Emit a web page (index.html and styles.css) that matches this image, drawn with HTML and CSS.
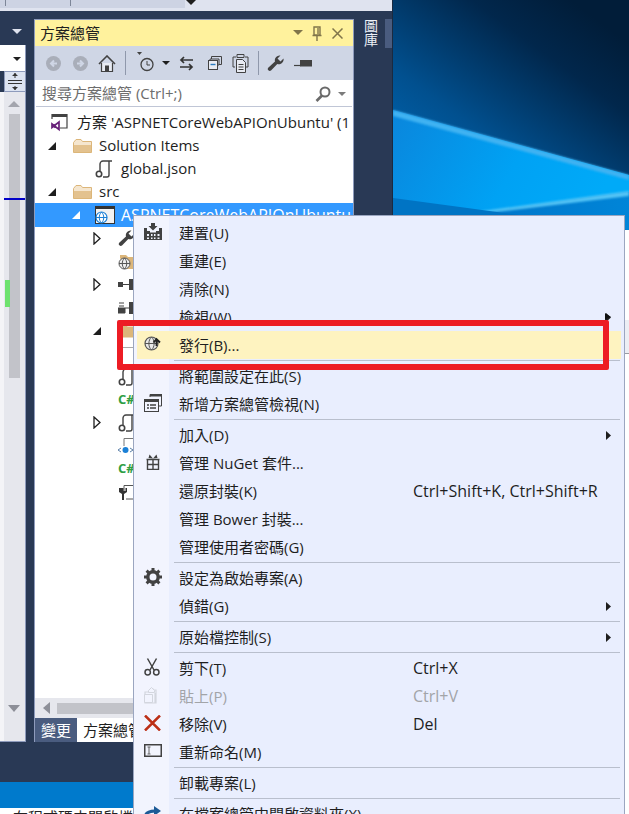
FILE: index.html
```html
<!DOCTYPE html>
<html lang="zh-Hant">
<head>
<meta charset="utf-8">
<title>方案總管</title>
<link rel="stylesheet" href="styles.css">
</head>
<body>
<div class="desktop">
  <svg class="wallpaper" viewBox="0 0 236 230" preserveAspectRatio="none">
    <defs>
      <linearGradient id="sky" x1="0" y1="1" x2="0.75" y2="0">
        <stop offset="0" stop-color="#0074c8"/><stop offset="0.45" stop-color="#01508f"/><stop offset="0.8" stop-color="#01274c"/><stop offset="1" stop-color="#011d39"/>
      </linearGradient>
      <linearGradient id="low" x1="0" y1="0" x2="1" y2="0.3">
        <stop offset="0" stop-color="#0a86dc"/><stop offset="0.6" stop-color="#00a2f4"/><stop offset="1" stop-color="#00aaf8"/>
      </linearGradient>
      <linearGradient id="sea" x1="0" y1="0" x2="1" y2="0">
        <stop offset="0" stop-color="#0070c4"/><stop offset="1" stop-color="#0085d8"/>
      </linearGradient>
      <filter id="soft"><feGaussianBlur stdDeviation="1"/></filter>
    </defs>
    <rect width="236" height="230" fill="url(#sky)"/>
    <polygon points="0,110 236,175 236,230 0,230" fill="url(#low)"/>
    <polygon points="0,110 236,175 236,180 0,116" fill="#3fb2f2" filter="url(#soft)"/>
    <polygon points="55,217 236,192 236,230 40,230" fill="url(#sea)"/>
    <polygon points="60,215 236,191 236,196 70,216" fill="#52c4f6" filter="url(#soft)"/>
    <polygon points="0,198 236,230 0,230" fill="#0074c4"/>
  </svg>
  <div class="right-strip"><div class="right-bar"></div></div>

  <div class="ide">
    <div class="topbar">
      <div class="topbar-tools"><i class="tsep"></i><i class="tsep second"></i></div>
      <svg class="topbar-caret" width="10" height="6"><polygon points="0,0 10,0 5,5" fill="#1e1e1e"/></svg>
    </div>
    <div class="workspace">
      <div class="editor-side">
        <div class="editor-head"><svg width="10" height="6"><polygon points="0,0 10,0 5,5" fill="#dfe3ef"/></svg></div>
        <div class="editor-combo"><svg width="8" height="5"><polygon points="0,0 8,0 4,4" fill="#1e1e1e"/></svg></div>
        <div class="editor-split">
          <svg width="14" height="17" viewBox="0 0 14 17"><path d="M0 7.5h14M0 10.5h14" stroke="#333" fill="none"/><path d="M7 0v5M7 13v4" stroke="#333"/><path d="M4 3l3-3 3 3zM4 14l3 3 3-3z" fill="#333"/></svg>
        </div>
        <div class="editor-gutter">
          <div class="vscroll">
            <svg class="sc-up" width="12" height="6"><polygon points="0,6 12,6 6,0" fill="#a3a5ad"/></svg>
            <div class="sc-thumb"><b class="sc-blue"></b><b class="sc-green"></b></div>
            <svg class="sc-down" width="12" height="7"><polygon points="0,0 12,0 6,7" fill="#8d8f98"/></svg>
          </div>
        </div>
      </div>

      <div class="explorer">
        <div class="ex-title">
          <span class="ex-name">方案總管</span>
          <svg width="10" height="6"><polygon points="0,0 10,0 5,5" fill="#80754a"/></svg>
          <svg class="pin" width="10" height="15" viewBox="0 0 10 15"><path d="M2 1h6v8H2zM0.5 9.5h9M5 10v5M6 2v6" stroke="#80754a" stroke-width="1.4" fill="none"/></svg>
          <svg class="closex" width="11" height="11" viewBox="0 0 11 11"><path d="M0.5 0.5l10 10M10.5 0.5l-10 10" stroke="#80754a" stroke-width="1.5"/></svg>
        </div>
        <div class="ex-tools">
          <svg class="tb i1" width="15" height="15" viewBox="0 0 15 15"><circle cx="7.5" cy="7.5" r="7.5" fill="#a9aeb9"/><path d="M11 7.5H5M8 4.5l-3 3 3 3" stroke="#cfd6e5" stroke-width="2" fill="none"/></svg>
          <svg class="tb i2" width="15" height="15" viewBox="0 0 15 15"><circle cx="7.5" cy="7.5" r="7.5" fill="#a9aeb9"/><path d="M4 7.5h6M7 4.5l3 3-3 3" stroke="#cfd6e5" stroke-width="2" fill="none"/></svg>
          <svg class="tb i3" width="18" height="17" viewBox="0 0 18 17"><path d="M1 9l8-8 8 8" stroke="#424242" stroke-width="1.6" fill="none"/><path d="M3.5 8v8.5h11V8" stroke="#424242" stroke-width="1.2" fill="#e8ebf2"/><rect x="7" y="10.5" width="4" height="6" fill="#424242"/></svg>
          <i class="tb-sep s1"></i>
          <svg class="tb i4" width="18" height="20" viewBox="0 0 18 20"><polygon points="0,0 5,0 2.5,3" fill="#424242"/><circle cx="10" cy="12.5" r="6" fill="none" stroke="#424242" stroke-width="1.3"/><path d="M10 9v4h3" stroke="#424242" fill="none"/></svg>
          <svg class="tb i5" width="8" height="5"><polygon points="0,0 8,0 4,4" fill="#1e1e1e"/></svg>
          <svg class="tb i6" width="15" height="15" viewBox="0 0 15 15"><path d="M14 4H2M5 1L2 4l3 3M1 11h12M10 8l3 3-3 3" stroke="#333" stroke-width="1.7" fill="none"/></svg>
          <svg class="tb i7" width="14" height="14" viewBox="0 0 14 14"><path d="M3.5 3V.5h10v8H11" stroke="#424242" fill="none"/><path d="M2 4V3h9v6h-1" stroke="#424242" fill="none"/><rect x=".5" y="4.5" width="9" height="9" fill="#e8ebf2" stroke="#424242"/><path d="M2.5 8.5h5" stroke="#2b7bc0" stroke-width="1.4"/></svg>
          <svg class="tb i8" width="17" height="19" viewBox="0 0 17 19"><path d="M3 13H1V3h3M13 3h3v10h-2" stroke="#424242" fill="none"/><path d="M5 .5h7v3H5z" fill="none" stroke="#424242"/><path d="M4.500 5.500h6l3 3v10h-9z" fill="#e8ebf2" stroke="#424242"/><path d="M6.500 10.500h5M6.500 13h5M6.500 15.500h5" stroke="#424242"/></svg>
          <i class="tb-sep s2"></i>
          <svg class="tb i9" width="17" height="17" viewBox="0 0 17 17"><path d="M16.500 3.500a4.800 4.800 0 0 1-6.200 5.500L4 15.500a2 2 0 0 1-2.800-2.800L8 6.500A4.800 4.800 0 0 1 13.500.5L10.500 3.500l3 3z" fill="#424242"/></svg>
          <svg class="tb i10" width="18" height="7" viewBox="0 0 18 7"><path d="M0 5.500h7" stroke="#424242" stroke-width="1.200"/><rect x="6" y="0" width="12" height="6.500" fill="#424242"/></svg>
        </div>
        <div class="ex-search">
          <span class="ex-hint">搜尋方案總管 (Ctrl+;)</span>
          <svg width="16" height="16" viewBox="0 0 16 16"><circle cx="10" cy="6" r="4.500" fill="none" stroke="#6a6a6a" stroke-width="2"/><path d="M7 9.500L1.500 15" stroke="#6a6a6a" stroke-width="2.600"/></svg>
          <svg class="search-caret" width="8" height="4"><polygon points="0,0 8,0 4,4" fill="#7b7b7b"/></svg>
        </div>
        <div class="tree">
          <div class="row root">
            <svg class="ico" width="18" height="19" viewBox="0 0 18 19"><path d="M1 6V1.500h15V15H9" stroke="#424242" stroke-width="1.200" fill="none"/><rect x="1" y="1" width="15" height="3" fill="#424242"/><path d="M1 11l7 5.500V9L1 14.500zM3 12.500l1.500-1M3 13.500l1.500 1" stroke="#68217a" stroke-width="1.700" fill="none"/></svg>
            <span class="clip">方案 'ASPNETCoreWebAPIOnUbuntu' (1</span>
          </div>
          <div class="row d1">
            <span class="tw"><svg width="8" height="8"><polygon points="8,0 8,8 0,8" fill="#1e1e1e"/></svg></span>
            <svg class="ico folder" width="19" height="14" viewBox="0 0 19 14"><path d="M.5 3.500L3 .5h5l1.500 2h9V13.500H.5z" fill="#f5e6cf" stroke="#dcb67a"/><path d="M.5 6h18v7.500H.5z" fill="#dcb67a" opacity=".75"/></svg>
            <span>Solution Items</span>
          </div>
          <div class="row d2">
            <span class="tw"></span>
            <svg class="ico" width="18" height="18" viewBox="0 0 18 18"><path d="M5 12V4a3 3 0 0 1 3-3h9M8 17h4a2 2 0 0 0 2-2V1.500" stroke="#424242" stroke-width="1.400" fill="none"/><circle cx="4" cy="14" r="2.700" fill="none" stroke="#424242" stroke-width="1.600"/></svg>
            <span>global.json</span>
          </div>
          <div class="row d1">
            <span class="tw"><svg width="8" height="8"><polygon points="8,0 8,8 0,8" fill="#1e1e1e"/></svg></span>
            <svg class="ico folder" width="19" height="14" viewBox="0 0 19 14"><path d="M.5 3.500L3 .5h5l1.500 2h9V13.500H.5z" fill="#f5e6cf" stroke="#dcb67a"/><path d="M.5 6h18v7.500H.5z" fill="#dcb67a" opacity=".75"/></svg>
            <span>src</span>
          </div>
          <div class="row d2 selected">
            <span class="tw"><svg width="8" height="8"><polygon points="8,0 8,8 0,8" fill="#fff"/></svg></span>
            <svg class="ico" width="20" height="18" viewBox="0 0 20 18"><rect x=".5" y=".5" width="19" height="17" fill="#f2f2f2" stroke="#333"/><rect x="0" y="0" width="20" height="3" fill="#333"/><circle cx="6.500" cy="11.500" r="5.500" fill="#fff" stroke="#1b80d6" stroke-width="1.200"/><path d="M1 11.500h11M6.500 6c-3 3-3 8 0 11M6.500 6c3 3 3 8 0 11" stroke="#1b80d6" fill="none"/></svg>
            <span class="startup">ASPNETCoreWebAPIOnUbuntu</span>
          </div>
          <div class="row d3">
            <span class="tw"><svg width="8" height="13"><polygon points="1,1 7,6.500 1,12" fill="#fff" stroke="#1e1e1e" stroke-width="1.300"/></svg></span>
            <svg class="ico" width="17" height="17" viewBox="0 0 17 17"><path d="M16.500 3.500a4.800 4.800 0 0 1-6.200 5.500L4 15.500a2 2 0 0 1-2.800-2.800L8 6.500A4.800 4.800 0 0 1 13.500.5L10.500 3.500l3 3z" fill="#424242"/></svg>
          </div>
          <div class="row d3">
            <span class="tw"></span>
            <svg class="ico" width="18" height="16" viewBox="0 0 18 16"><path d="M2 4V1h6l2 2h8v12H8z" fill="#dcb67a"/><circle cx="6.500" cy="9.500" r="5.500" fill="#eee" stroke="#555"/><path d="M1 9.500h11M6.500 4c-3 3-3 8 0 11M6.500 4c3 3 3 8 0 11" stroke="#555" fill="none"/></svg>
          </div>
          <div class="row d3">
            <span class="tw"><svg width="8" height="13"><polygon points="1,1 7,6.500 1,12" fill="#fff" stroke="#1e1e1e" stroke-width="1.300"/></svg></span>
            <svg class="ico" width="18" height="11" viewBox="0 0 18 11"><rect y="3" width="5" height="5" fill="#424242"/><path d="M5 5.500h7" stroke="#424242"/><rect x="11" y="0" width="6" height="11" fill="#424242"/></svg>
          </div>
          <div class="row d3">
            <span class="tw"></span>
            <svg class="ico" width="18" height="12" viewBox="0 0 18 12"><path d="M1 1h5M1 4h5M0 6h7v5H0z" stroke="#424242" fill="#424242"/><path d="M7 6h5" stroke="#424242"/><rect x="11" y="0" width="6" height="12" fill="#424242"/></svg>
          </div>
          <div class="row d3">
            <span class="tw"><svg width="8" height="8"><polygon points="8,0 8,8 0,8" fill="#1e1e1e"/></svg></span>
            <svg class="ico" width="19" height="14" viewBox="0 0 19 14"><path d="M.5 3.500L3 .5h5l1.500 2h9V13.500H.5z" fill="#dcb67a"/></svg>
          </div>
          <div class="row d3">
            <span class="tw"></span>
            <svg class="ico" width="16" height="16" viewBox="0 0 16 16"><path d="M4 11V1.500h12" stroke="#aaa" fill="none"/></svg>
          </div>
          <div class="row d3">
            <span class="tw"></span>
            <svg class="ico" width="18" height="18" viewBox="0 0 18 18"><path d="M5 12V4a3 3 0 0 1 3-3h9M8 17h4a2 2 0 0 0 2-2V1.500" stroke="#424242" stroke-width="1.400" fill="none"/><circle cx="4" cy="14" r="2.700" fill="none" stroke="#424242" stroke-width="1.600"/></svg>
          </div>
          <div class="row d3">
            <span class="tw"></span>
            <span class="csharp">C#</span>
          </div>
          <div class="row d3">
            <span class="tw"><svg width="8" height="13"><polygon points="1,1 7,6.500 1,12" fill="#fff" stroke="#1e1e1e" stroke-width="1.300"/></svg></span>
            <svg class="ico" width="18" height="18" viewBox="0 0 18 18"><path d="M5 12V4a3 3 0 0 1 3-3h9M8 17h4a2 2 0 0 0 2-2V1.500" stroke="#424242" stroke-width="1.400" fill="none"/><circle cx="4" cy="14" r="2.700" fill="none" stroke="#424242" stroke-width="1.600"/></svg>
          </div>
          <div class="row d3">
            <span class="tw"></span>
            <svg class="ico" width="18" height="20" viewBox="0 0 18 20"><path d="M6 10V2.500h10" stroke="#777" fill="none"/><path d="M0 14l3-2M0 14l3 2M15 14l-3-2M15 14l-3 2" stroke="#5a7fa8" fill="none"/><circle cx="7.500" cy="14" r="3" fill="#1b80d6"/></svg>
          </div>
          <div class="row d3">
            <span class="tw"></span>
            <span class="csharp">C#</span>
          </div>
          <div class="row d3">
            <span class="tw"></span>
            <svg class="ico" width="18" height="18" viewBox="0 0 18 18"><path d="M6 8V2.500h10M8 16h8" stroke="#555" fill="none"/><path d="M1 5v4l3 2v6h2v-6l3-2V5H7.500v3h-2V5z" fill="#333"/></svg>
          </div>
        </div>
        <div class="ex-hscroll">
          <svg width="7" height="12"><polygon points="7,0 7,12 0,6" fill="#8d8f98"/></svg>
          <div class="hthumb"></div>
        </div>
        <div class="ex-tabs">
          <span class="tab">變更</span>
          <span class="tab active">方案總管</span>
        </div>
      </div>

      <div class="side-tab"><span>圖庫</span><i class="side-thumb"></i></div>
    </div>
    <div class="statusbar"></div>
  </div>
  <div class="behind-strip">在程式碼中開啟檔</div>

  <div class="menu">
    <div class="item">
      <span class="mi"><svg width="18" height="17" viewBox="0 0 18 17"><path d="M7 0h4v3h2.500L9 7.500 4.500 3H7z" fill="#424242"/><path d="M0 5h3v3h3v1.500h6V8h3V5h3v12H0z" fill="#424242"/><path d="M3 11h2v2H3zM7 11h1.500v2H7zM10 11h1.500v2H10zM13.500 11h2v2h-2zM3 14.500h2V16H3zM7 14.500h1.500V16H7zM10 14.500h1.500V16H10zM13.500 14.500h2V16h-2z" fill="#f2f4fe"/></svg></span>
      <span class="ml">建置(U)</span>
    </div>
    <div class="item"><span class="mi"></span><span class="ml">重建(E)</span></div>
    <div class="item"><span class="mi"></span><span class="ml">清除(N)</span></div>
    <div class="item"><span class="mi"></span><span class="ml">檢視(W)</span><svg class="arrow" width="5" height="9"><polygon points="0,0 5,4.500 0,9" fill="#1e1e1e"/></svg></div>
    <div class="item hot">
      <span class="mi"><svg width="18" height="15" viewBox="0 0 18 15"><circle cx="7.500" cy="7.500" r="6.500" fill="#e9e9e9" stroke="#555" stroke-width="1.200"/><path d="M1 7.500h13M7.500 1c-3.500 3-3.500 10 0 13M7.500 1c3.500 3 3.500 10 0 13" stroke="#555" fill="none"/><path d="M12.500 10V3.500M9.500 6.500l3-3.500 3.500 3.500" stroke="#222" stroke-width="1.800" fill="none"/></svg></span>
      <span class="ml">發行(B)...</span>
    </div>
    <div class="sep"></div>
    <div class="item"><span class="mi"></span><span class="ml">將範圍設定在此(S)</span></div>
    <div class="item">
      <span class="mi"><svg width="18" height="18" viewBox="0 0 18 18"><path d="M6 3V.5h11.500V12H15" stroke="#424242" fill="none"/><rect x="6" y="0" width="12" height="2.500" fill="#424242"/><rect x=".5" y="5.500" width="14" height="12" fill="#f2f4fe" stroke="#424242"/><rect x="0" y="5" width="15" height="3" fill="#424242"/><path d="M3 11h2M6 11h6M3 14h2M6 14h6" stroke="#424242" stroke-width="1.300"/></svg></span>
      <span class="ml">新增方案總管檢視(N)</span>
    </div>
    <div class="sep"></div>
    <div class="item"><span class="mi"></span><span class="ml">加入(D)</span><svg class="arrow" width="5" height="9"><polygon points="0,0 5,4.500 0,9" fill="#1e1e1e"/></svg></div>
    <div class="item">
      <span class="mi"><svg class="gift" width="14" height="17" viewBox="0 0 14 17"><path d="M1.500 6.500h11v10h-11zM.5 6.500h13M7 6.500v10M1.500 11.500h11" stroke="#424242" stroke-width="1.400" fill="none"/><path d="M7 5.500L3.500 1.500 2.500 5zM7 5.500l3.500-4 1 3.500z" fill="#424242"/></svg></span>
      <span class="ml">管理 NuGet 套件...</span>
    </div>
    <div class="item"><span class="mi"></span><span class="ml">還原封裝(K)</span><span class="ms">Ctrl+Shift+K, Ctrl+Shift+R</span></div>
    <div class="item"><span class="mi"></span><span class="ml">管理 Bower 封裝...</span></div>
    <div class="item"><span class="mi"></span><span class="ml">管理使用者密碼(G)</span></div>
    <div class="sep"></div>
    <div class="item">
      <span class="mi"><svg width="18" height="18" viewBox="0 0 18 18"><circle cx="9" cy="9" r="5.200" fill="none" stroke="#424242" stroke-width="3.400"/><path d="M9 0v3M9 15v3M0 9h3M15 9h3M2.600 2.600l2.100 2.100M13.300 13.300l2.100 2.100M15.400 2.600l-2.100 2.100M4.700 13.300l-2.100 2.100" stroke="#424242" stroke-width="3"/></svg></span>
      <span class="ml">設定為啟始專案(A)</span>
    </div>
    <div class="item"><span class="mi"></span><span class="ml">偵錯(G)</span><svg class="arrow" width="5" height="9"><polygon points="0,0 5,4.500 0,9" fill="#1e1e1e"/></svg></div>
    <div class="sep"></div>
    <div class="item"><span class="mi"></span><span class="ml">原始檔控制(S)</span><svg class="arrow" width="5" height="9"><polygon points="0,0 5,4.500 0,9" fill="#1e1e1e"/></svg></div>
    <div class="sep"></div>
    <div class="item">
      <span class="mi"><svg width="16" height="18" viewBox="0 0 16 18"><path d="M3.500 .5L10 12M12.500 .5L6 12" stroke="#424242" stroke-width="1.500" fill="none"/><circle cx="3.700" cy="14.300" r="2.700" fill="none" stroke="#424242" stroke-width="1.500"/><circle cx="12.300" cy="14.300" r="2.700" fill="none" stroke="#424242" stroke-width="1.500"/></svg></span>
      <span class="ml">剪下(T)</span><span class="ms">Ctrl+X</span>
    </div>
    <div class="item disabled">
      <span class="mi"><svg width="16" height="18" viewBox="0 0 16 18"><path d="M9 2.500V4h3v13H1V6h3.500M11 7v10" stroke="#d3d6de" stroke-width="1.200" fill="none"/><path d="M4.500 4.500l3-3 3 3v2h-6zM.5 8.500h8v8h-8z" fill="#f2f4fe" stroke="#d3d6de"/></svg></span>
      <span class="ml">貼上(P)</span><span class="ms">Ctrl+V</span>
    </div>
    <div class="item">
      <span class="mi"><svg width="17" height="16" viewBox="0 0 17 16"><path d="M1 .5l15 15M16 .5l-15 15" stroke="#bc2f16" stroke-width="2.500"/></svg></span>
      <span class="ml">移除(V)</span><span class="ms">Del</span>
    </div>
    <div class="item">
      <span class="mi"><svg width="18" height="13" viewBox="0 0 18 13"><rect x=".75" y=".75" width="16.500" height="11.500" fill="#f2f4fe" stroke="#424242" stroke-width="1.500"/><path d="M3.500 3h3M3.500 10h3M5 3v7" stroke="#666" fill="none"/></svg></span>
      <span class="ml">重新命名(M)</span>
    </div>
    <div class="sep"></div>
    <div class="item"><span class="mi"></span><span class="ml">卸載專案(L)</span></div>
    <div class="sep"></div>
    <div class="item">
      <span class="mi"><svg width="18" height="16" viewBox="0 0 18 16"><path d="M1 13c0-5 4-7 10-7" stroke="#1c5a96" stroke-width="3" fill="none"/><path d="M10 1l7 5-7 5z" fill="#1c5a96"/></svg></span>
      <span class="ml">在檔案總管中開啟資料夾(X)</span>
    </div>
  </div>

  <svg class="pointer" width="6" height="8" viewBox="0 0 6 8"><polygon points="0,0 6,4 2,5 0,8" fill="#111"/></svg>
  <div class="redbox"></div>
</div>
</body>
</html>
```

FILE: styles.css
```css
* { box-sizing: border-box; }
html, body { margin: 0; padding: 0; }
body { width: 629px; height: 814px; overflow: hidden; background: #fff; font-family: "Open Sans", "Noto Sans CJK TC", sans-serif; font-size: 15px; color: #1e1e1e; }
svg { display: block; flex: none; }

.desktop { position: relative; width: 629px; height: 814px; overflow: hidden; }
.wallpaper { position: absolute; left: 393px; top: 0; width: 236px; height: 230px; }
.right-strip { position: absolute; left: 625px; top: 230px; width: 4px; height: 584px; background: #fff; }
.right-bar { margin-top: 90px; height: 34px; background: #eceef4; border-bottom: 1px solid #9a9ca3; }

.ide { position: absolute; left: 0; top: 0; width: 393px; height: 808px; display: flex; flex-direction: column; background: #293955; border-right: 1px solid #1b2a40; }
.topbar { height: 11px; flex: none; background: #dfe3ef; display: flex; align-items: flex-start; }
.topbar-tools { width: 185px; height: 8px; background: #cdd3e3; display: flex; }
.tsep { width: 1px; height: 6px; margin-left: 5px; background: #7d8698; }
.tsep.second { margin-left: 64px; }
.topbar-caret { margin-left: 1px; }
.workspace { flex: 1; display: flex; min-height: 0; padding-bottom: 40px; }

.editor-side { width: 26px; flex: none; display: flex; flex-direction: column; }
.editor-head { height: 34px; flex: none; padding: 18px 0 0 12px; }
.editor-combo { height: 26px; flex: none; background: #fff; border-right: 1px solid #8e9bbc; padding: 12px 0 0 13px; }
.editor-split { height: 21px; flex: none; margin-left: 4px; background: #dce3f1; border: 1px solid #8e9bbc; padding: 1px 0 0 3px; }
.editor-gutter { flex: 1; min-height: 0; background: #f4f4f7; padding-left: 4px; border-right: 1px solid #8e9bbc; border-bottom: 1px solid #8e9bbc; }
.vscroll { height: 100%; background: #e6e7ed; padding: 9px 0 0 5px; display: flex; flex-direction: column; align-items: flex-start; position: relative; }
.sc-thumb { width: 11px; height: 264px; margin-top: 7px; background: #c2c3c9; }
.sc-up { margin-left: -1px; }
.sc-down { margin: auto 0 29px -1px; }
.sc-blue { position: absolute; left: 0; top: 106px; width: 21px; height: 2px; background: #0000c8; }
.sc-green { position: absolute; left: 1px; top: 188px; width: 5px; height: 27px; background: #6ee26e; }

.explorer { width: 320px; flex: none; margin: 8px 0 0 8px; display: flex; flex-direction: column; border: 1px solid #8e9bbc; border-bottom: 0; background: #fff; min-height: 0; }
.ex-title { height: 26px; flex: none; background: #fff29d; display: flex; align-items: center; padding: 0 10px 0 5px; }
.ex-name { flex: 1; color: #1e1e1e; line-height: 26px; }
.pin { margin-left: 9px; }
.closex { margin-left: 10px; }
.ex-tools { height: 34px; flex: none; background: #cfd6e5; display: flex; align-items: center; padding-left: 11px; }
.tb-sep { width: 1px; height: 24px; background: #8f98ab; flex: none; }
.i2 { margin-left: 12px; }
.i3 { margin-left: 10px; }
.s1 { margin-left: 9px; }
.i4 { margin-left: 11px; margin-top: -3px; }
.i5 { margin-left: 7px; }
.i6 { margin-left: 9px; }
.i7 { margin-left: 14px; }
.i8 { margin-left: 10px; }
.s2 { margin-left: 9px; }
.i9 { margin-left: 8px; }
.i10 { margin-left: 10px; }

.ex-search { height: 25px; flex: none; margin: 1px 1px 2px 1px; background: #fff; display: flex; align-items: center; padding: 0 6px; box-shadow: 0 1px 0 #c0c6d6; }
.ex-hint { flex: 1; color: #6d6d6d; line-height: 25px; white-space: nowrap; }
.search-caret { margin-left: 7px; }

.tree { flex: 1; min-height: 0; overflow: hidden; padding-top: 3px; }
.row { height: 23px; display: flex; align-items: center; white-space: nowrap; overflow: hidden; line-height: 23px; }
.row.root { padding-left: 16px; }
.row.d1 { padding-left: 11px; }
.row.d2 { padding-left: 33px; }
.row.d3 { padding-left: 56px; }
.row.selected { background: #3399ff; color: #fff; height: 24px; }
.clip { flex: 1; min-width: 0; overflow: hidden; }
.startup { font-size: 16px; margin-left: -2px; }
.tw { width: 27px; flex: none; padding-left: 2px; display: flex; }
.row.d2 .tw { padding-left: 4px; }
.ico { margin-right: 8px; flex: none; }
.folder { margin-right: 7px; }
.csharp { color: #2f9e44; font-weight: 700; font-size: 13px; }

.ex-hscroll { height: 20px; flex: none; background: #e6e7ed; display: flex; align-items: center; padding-left: 8px; }
.hthumb { width: 240px; height: 11px; margin-left: 7px; background: #c2c3c9; }
.ex-tabs { height: 24px; flex: none; display: flex; background: #fff; }
.tab { padding: 0 6px; line-height: 24px; color: #fff; background: #4a5c7f; width: 42px; flex: none; white-space: nowrap; }
.tab.active { color: #1e1e1e; background: #fff; width: auto; }

.side-tab { flex: 1; display: flex; padding-left: 9px; align-items: flex-start; }
.side-tab span { writing-mode: vertical-rl; color: #eef2f8; font-size: 14px; margin-top: 8px; letter-spacing: 0; line-height: 15px; }
.side-thumb { width: 7px; height: 29px; margin: 8px 0 0 auto; background: #4a5c7f; }

.statusbar { height: 26px; flex: none; background: #007acc; }
.behind-strip { position: absolute; left: 0; top: 808px; width: 133px; height: 6px; overflow: hidden; background: #fff; font-size: 15px; line-height: 18px; padding-left: 13px; white-space: nowrap; color: #222; }

.menu { position: absolute; left: 133px; top: 215px; width: 492px; height: 620px; background: linear-gradient(90deg, #f2f4fe 35px, #e9eefe 35px); border: 1px solid #9ba6c0; padding: 3px 3px 0; }
.item { height: 28px; display: flex; align-items: center; line-height: 28px; white-space: nowrap; position: relative; }
.item.hot { background: #fef3c0; }
.item.disabled { color: #a2a4a8; }
.mi { width: 42px; flex: none; padding-left: 7px; display: flex; align-items: center; height: 100%; margin-top: -3px; }
.gift { margin-left: 2px; }
.ml { width: 234px; flex: none; }
.ms { flex: none; font-size: 16px; }
.arrow { margin-left: auto; margin-right: 10px; }
.sep { height: 3px; margin: 0 1px 0 37px; padding-top: 1px; }
.sep::before { content: ""; display: block; height: 1px; background: #b9bfcd; }

.pointer { position: absolute; left: 605px; top: 313px; }
.redbox { position: absolute; left: 117px; top: 320px; width: 492px; height: 50px; border: 6px solid #ed1c24; border-radius: 2px; }
```
